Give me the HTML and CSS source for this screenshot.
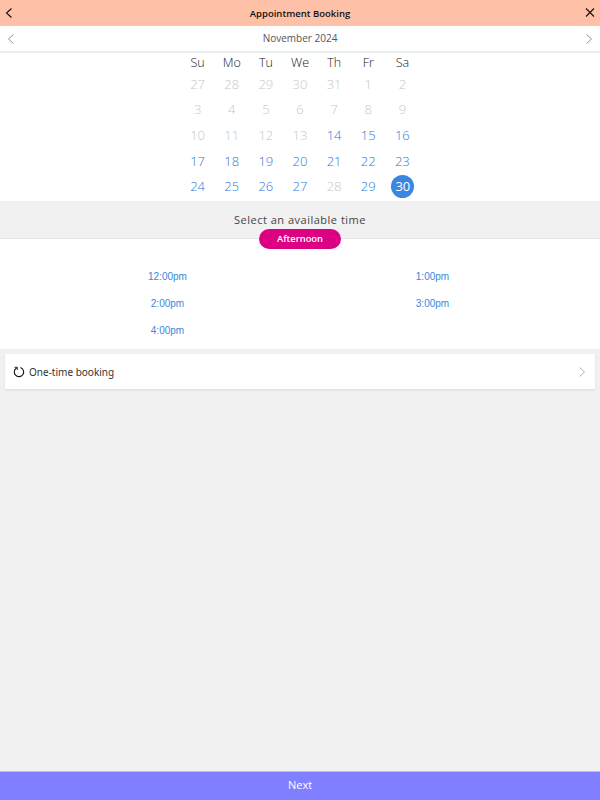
FILE: index.html
```html
<!DOCTYPE html>
<html lang="en">
<head>
<meta charset="utf-8">
<title>Appointment Booking</title>
<link rel="stylesheet" href="styles.css">
</head>
<body>
<div class="app">
  <header class="topbar">
    <svg class="top-icon" width="12" height="12" viewBox="0 0 12 12"><path d="M8.5 1.5 L3.5 6 L8.5 10.5" fill="none" stroke="#111" stroke-width="1.1"/></svg>
    <h1 class="title">Appointment Booking</h1>
    <svg class="top-icon" width="12" height="12" viewBox="0 0 12 12"><path d="M1 1.5 L9 9.5 M9 1.5 L1 9.5" fill="none" stroke="#111" stroke-width="1.1"/></svg>
  </header>
  <nav class="monthbar">
    <svg width="12" height="12" viewBox="0 0 12 12"><path d="M8.5 1.5 L3.5 6 L8.5 10.5" fill="none" stroke="#888" stroke-width="0.9"/></svg>
    <span class="month">November 2024</span>
    <svg width="12" height="12" viewBox="0 0 12 12"><path d="M3.5 1.5 L8.5 6 L3.5 10.5" fill="none" stroke="#888" stroke-width="0.9"/></svg>
  </nav>
  <section class="calendar">
    <div class="week heads"><span>Su</span><span>Mo</span><span>Tu</span><span>We</span><span>Th</span><span>Fr</span><span>Sa</span></div>
    <div class="week"><span class="off">27</span><span class="off">28</span><span class="off">29</span><span class="off">30</span><span class="off">31</span><span class="off">1</span><span class="off">2</span></div>
    <div class="week"><span class="off">3</span><span class="off">4</span><span class="off">5</span><span class="off">6</span><span class="off">7</span><span class="off">8</span><span class="off">9</span></div>
    <div class="week"><span class="off">10</span><span class="off">11</span><span class="off">12</span><span class="off">13</span><span class="on">14</span><span class="on">15</span><span class="on">16</span></div>
    <div class="week"><span class="on">17</span><span class="on">18</span><span class="on">19</span><span class="on">20</span><span class="on">21</span><span class="on">22</span><span class="on">23</span></div>
    <div class="week"><span class="on">24</span><span class="on">25</span><span class="on">26</span><span class="on">27</span><span class="off">28</span><span class="on">29</span><span class="on"><b class="selected">30</b></span></div>
  </section>
  <section class="prompt">
    <p class="prompt-text">Select an available time</p>
    <span class="pill">Afternoon</span>
  </section>
  <section class="slots">
    <a class="slot">12:00pm</a><a class="slot">1:00pm</a>
    <a class="slot">2:00pm</a><a class="slot">3:00pm</a>
    <a class="slot">4:00pm</a>
  </section>
  <section class="card">
    <svg width="12" height="12" viewBox="0 0 12 12"><path d="M3.6 1.9 A4.7 4.7 0 1 0 7.4 1.5" fill="none" stroke="#111" stroke-width="1.1"/><path d="M1.6 1.4 L4.3 1.2 L4.3 3.9" fill="none" stroke="#111" stroke-width="0.9"/></svg>
    <span class="card-label">One-time booking</span>
    <svg class="card-chev" width="12" height="12" viewBox="0 0 12 12"><path d="M3.5 1.5 L8.5 6 L3.5 10.5" fill="none" stroke="#aaa" stroke-width="0.9"/></svg>
  </section>
  <div class="spacer"></div>
  <footer class="next">Next</footer>
</div>
</body>
</html>
```
FILE: styles.css
```css
* { box-sizing: border-box; }
html, body { margin: 0; height: 100%; }
body { background: #f1f1f1; font-family: "Open Sans", sans-serif; }
.app { display: flex; flex-direction: column; height: 800px; width: 600px; overflow: hidden; }
.topbar { height: 26px; background: #ffc0a8; display: flex; align-items: center; justify-content: space-between; padding: 0 3px; }
.top-icon { flex: none; }
.title { margin: 0; font-family: "Open Sans", sans-serif; font-size: 9.5px; font-weight: 600; color: #111; }
.monthbar { height: 27px; background: #fff; border-bottom: 2px solid #eaeeee; display: flex; align-items: center; justify-content: space-between; padding: 0 5px; }
.month { font-size: 10px; color: #555; font-weight: 400; position: relative; top: -1px; }
.calendar { background: #fff; height: 148px; display: flex; flex-direction: column; align-items: center; }
.week { display: grid; grid-template-columns: repeat(7, 34.14px); height: 25.6px; align-items: center; justify-items: center; font-size: 13px; font-weight: 300; }
.heads { height: 18px; color: #222; font-weight: 300; font-size: 12.5px; }
.off { color: #c4c9c9; }
.on { color: #2a78dc; }
.selected { display: flex; align-items: center; justify-content: center; width: 23px; height: 23px; border-radius: 50%; background: #3a86e0; color: #fff; font-weight: 400; margin-left: 1px; }
.prompt { position: relative; height: 38px; background: #f1f1f1; border-bottom: 1px solid #e4e8e8; text-align: center; }
.prompt-text { margin: 0; padding-top: 11px; font-size: 11px; line-height: 15px; letter-spacing: 0.5px; color: #444; }
.pill { position: absolute; left: 259px; top: 28px; width: 82px; height: 20px; border-radius: 10px; background: #dc0082; color: #fff; font-size: 9.4px; font-weight: 600; line-height: 19px; text-align: center; }
.slots { background: #fff; height: 110px; padding: 24px 35px 0; display: grid; grid-template-columns: 1fr 1fr; grid-auto-rows: 27px; }
.slot { font-family: "Liberation Sans", sans-serif; font-size: 10px; color: #3a86e0; text-align: center; line-height: 27px; }
.card { margin: 5px 5px 0; height: 35px; background: #fff; box-shadow: 0 1px 2px rgba(0,0,0,.1); display: flex; align-items: center; padding: 0 7px 0 8px; gap: 4px; }
.card-label { flex: 1; font-family: "Noto Sans", sans-serif; font-size: 10px; color: #333; }
.spacer { flex: 1; }
.next { height: 29px; background: #7f7fff; border-top: 1px solid #b8b8f0; color: #fff; font-size: 11px; text-align: center; line-height: 26px; }
```
